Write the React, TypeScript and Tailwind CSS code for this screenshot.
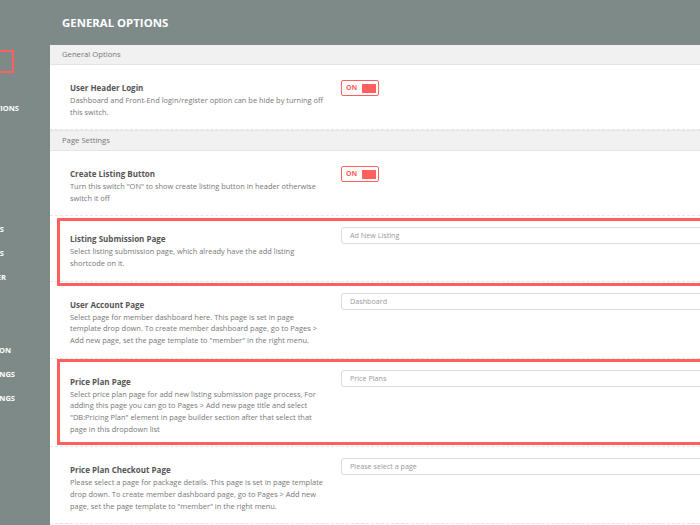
import React from "react"

const font = { fontFamily: '"Open Sans", "Noto Sans", sans-serif' }

const sideItems = [
  { label: "GENERAL OPTIONS", end: "w-[19px]", top: "mt-[31px]" },
  { label: "PAGES", end: "w-[4px]", top: "mt-[112px]" },
  { label: "LISTINGS", end: "w-[4px]", top: "mt-[15px]" },
  { label: "HEADER", end: "w-[6px]", top: "mt-[15px]" },
  { label: "SUBMISSION", end: "w-[11px]", top: "mt-[64px]" },
  { label: "LISTINGS SETTINGS", end: "w-[15px]", top: "mt-[15px]" },
  { label: "MAP SETTINGS", end: "w-[15px]", top: "mt-[15px]" },
]

const Sidebar = () => (
  <div className="w-[50px] shrink-0 overflow-hidden">
    <div className="mt-[50px] -ml-[20px] h-[23px] w-[34px] border-2 border-[#ff5f5f]" />
    {sideItems.map((item) => (
      <div
        key={item.label}
        className={`${item.top} ${item.end} flex justify-end whitespace-nowrap text-[7.5px] font-bold leading-[9px] text-white`}
      >
        {item.label}
      </div>
    ))}
  </div>
)

const Toggle = () => (
  <div className="flex h-[16px] w-[38px] items-center justify-between rounded-[2px] border-[1.5px] border-[#ff5f5f] pl-[4px] pr-[2px]">
    <span className="text-[7px] font-bold text-[#ff5f5f]">ON</span>
    <span className="h-[9px] w-[14px] bg-[#ff5f5f]" />
  </div>
)

const Select = ({ value }: { value: string }) => (
  <div className="flex h-[17px] w-[380px] items-center rounded-[3px] border border-[#dcdcdc] px-[8px] text-[7.2px] text-[#999]">
    {value}
  </div>
)

const SectionHeader = ({ title, top }: { title: string; top?: boolean }) => (
  <div
    className={`flex items-center border-b border-[#e4e4e4] bg-[#f1f1f1] px-[12px] text-[7.7px] text-[#777] ${top ? "h-[21px] border-t" : "h-[20px]"}`}
  >
    {title}
  </div>
)

type RowProps = {
  title: string
  desc: string
  control: React.ReactNode
  input?: boolean
  mark?: string
}

const Row = ({ title, desc, control, input, mark }: RowProps) => (
  <div className="relative flex border-b border-dashed border-[#e6e6e6] pl-[20px] pt-[15px] pb-[10.7px]">
    <div className="mr-[15px] w-[256px] shrink-0">
      <div className="mt-[1px] text-[8px] font-bold leading-[14px] text-[#555]">{title}</div>
      <div className="text-[7.45px] leading-[11.75px] text-[#777]">{desc}</div>
    </div>
    <div className={input ? "-mt-[4px]" : ""}>{control}</div>
    {mark && (
      <div className={`pointer-events-none absolute left-[7px] -right-[10px] border-[3px] border-[#ff5f5f] ${mark}`} />
    )}
  </div>
)

export default function App() {
  return (
    <div className="flex h-[525px] w-[700px] overflow-hidden bg-[#7e8a88]" style={font}>
      <Sidebar />
      <div className="flex min-w-0 flex-1 flex-col">
        <div className="flex h-[45px] shrink-0 items-center px-[12px] text-[11.4px] font-bold text-white">
          GENERAL OPTIONS
        </div>
        <div className="flex-1 bg-white">
          <SectionHeader title="General Options" />
          <Row
            title="User Header Login"
            desc="Dashboard and Front-End login/register option can be hide by turning off this switch."
            control={<Toggle />}
          />
          <SectionHeader title="Page Settings" top />
          <Row
            title="Create Listing Button"
            desc={'Turn this switch "ON" to show create listing button in header otherwise switch it off'}
            control={<Toggle />}
          />
          <Row
            title="Listing Submission Page"
            desc="Select listing submission page, which already have the add listing shortcode on it."
            control={<Select value="Ad New Listing" />}
            input
            mark="top-[1.5px] -bottom-[5.8px]"
          />
          <Row
            title="User Account Page"
            desc={'Select page for member dashboard here. This page is set in page template drop down. To create member dashboard page, go to Pages > Add new page, set the page template to "member" in the right menu.'}
            control={<Select value="Dashboard" />}
            input
          />
          <Row
            title="Price Plan Page"
            desc={'Select price plan page for add new listing submission page process, For adding this page you can go to Pages > Add new page title and select "DB:Pricing Plan" element in page builder section after that select that page in this dropdown list'}
            control={<Select value="Price Plans" />}
            input
            mark="top-0 bottom-[1px]"
          />
          <Row
            title="Price Plan Checkout Page"
            desc={'Please select a page for package details. This page is set in page template drop down. To create member dashboard page, go to Pages > Add new page, set the page template to "member" in the right menu.'}
            control={<Select value="Please select a page" />}
            input
          />
        </div>
      </div>
    </div>
  )
}
